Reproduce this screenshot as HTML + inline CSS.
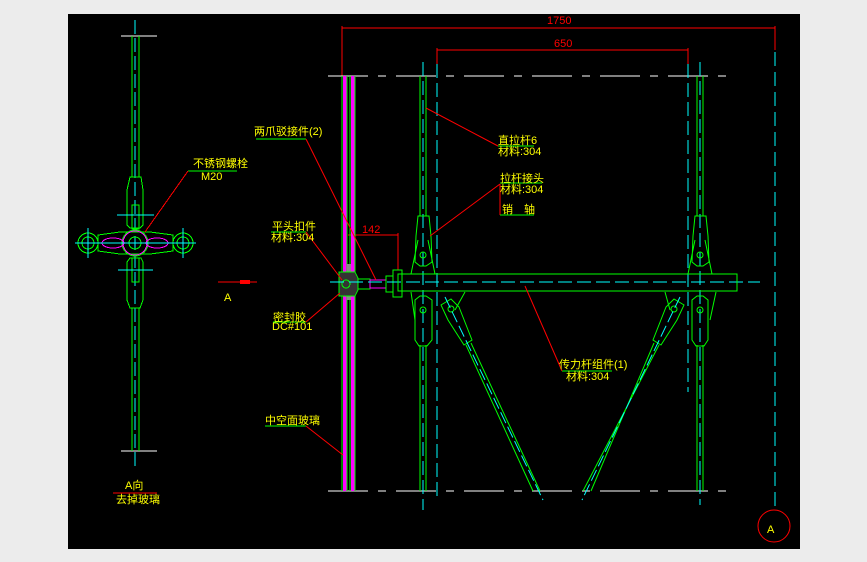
<!DOCTYPE html>
<html><head><meta charset="utf-8"><style>
html,body{margin:0;padding:0;background:#ececec;width:867px;height:562px;overflow:hidden}
svg{display:block}
text{font-family:"Liberation Sans","Noto Sans CJK SC",sans-serif;fill:#ffff00;font-size:11px}
</style></head><body>
<svg width="867" height="562" viewBox="0 0 867 562" xmlns="http://www.w3.org/2000/svg">
<rect x="68" y="14" width="732" height="535" fill="#000"/>
<g fill="none" stroke-width="1" shape-rendering="crispEdges">
<!-- LEFT VIEW -->
<line x1="121" y1="36" x2="157" y2="36" stroke="#fff"/>
<line x1="121" y1="451" x2="157" y2="451" stroke="#fff"/>
<line x1="132" y1="36" x2="132" y2="177" stroke="#0f0"/>
<line x1="139" y1="36" x2="139" y2="177" stroke="#0f0"/>
<line x1="132" y1="308" x2="132" y2="451" stroke="#0f0"/>
<line x1="139" y1="308" x2="139" y2="451" stroke="#0f0"/>
<line x1="135" y1="20" x2="135" y2="467" stroke="#0ff" stroke-dasharray="14,4"/>
<path d="M130 177 L141 177 L143 190 L143 225 L140 228 L130 228 L127 225 L127 190 Z" stroke="#0f0"/>
<path d="M130 258 L141 258 L143 262 L143 300 L140 308 L130 308 L127 300 L127 262 Z" stroke="#0f0"/>
<rect x="132" y="205" width="7" height="24" stroke="#0f0"/>
<rect x="132" y="258" width="7" height="24" stroke="#0f0"/>
<line x1="117" y1="215" x2="154" y2="215" stroke="#0ff"/>
<line x1="118" y1="270" x2="153" y2="270" stroke="#0ff"/>
<path d="M98 235 L120 232 L150 232 L173 235 L173 251 L150 254 L120 254 L98 251 Z" stroke="#0f0"/>
<circle cx="88" cy="243" r="10" stroke="#0f0"/>
<circle cx="88" cy="243" r="6" stroke="#0f0"/>
<circle cx="183" cy="243" r="10" stroke="#0f0"/>
<circle cx="183" cy="243" r="6" stroke="#0f0"/>
<circle cx="135" cy="243" r="13" stroke="#0f0"/>
<circle cx="135" cy="243" r="12" stroke="#f0f"/>
<circle cx="135" cy="243" r="6" stroke="#0f0"/>
<ellipse cx="113" cy="243" rx="11" ry="5" stroke="#f0f"/>
<ellipse cx="157" cy="243" rx="11" ry="5" stroke="#f0f"/>
<line x1="75" y1="243" x2="196" y2="243" stroke="#0ff"/>
<line x1="88" y1="228" x2="88" y2="258" stroke="#0ff"/>
<line x1="183" y1="228" x2="183" y2="258" stroke="#0ff"/>
<line x1="188" y1="171" x2="237" y2="171" stroke="#0f0"/>
<line x1="188" y1="171" x2="145" y2="232" stroke="#f00"/>
<line x1="113" y1="493" x2="157" y2="493" stroke="#f00"/>
<line x1="218" y1="282" x2="257" y2="282" stroke="#f00"/>
<rect x="240" y="280" width="10" height="4" fill="#f00" stroke="none"/>
<!-- Dimensions -->
<line x1="342" y1="28" x2="775" y2="28" stroke="#f00"/>
<line x1="342" y1="26" x2="342" y2="76" stroke="#f00"/>
<line x1="775" y1="26" x2="775" y2="50" stroke="#f00"/>
<line x1="437" y1="50" x2="688" y2="50" stroke="#f00"/>
<line x1="437" y1="48" x2="437" y2="64" stroke="#f00"/>
<line x1="688" y1="48" x2="688" y2="64" stroke="#f00"/>
<line x1="348" y1="235" x2="398" y2="235" stroke="#f00"/>
<line x1="398" y1="233" x2="398" y2="270" stroke="#f00"/>
<!-- white dashed -->
<line x1="328" y1="76" x2="730" y2="76" stroke="#fff" stroke-dasharray="40,10,8,10"/>
<line x1="328" y1="491" x2="730" y2="491" stroke="#fff" stroke-dasharray="40,10,8,10"/>
<!-- glass -->
<rect x="343" y="76" width="4" height="415" fill="#f0f" stroke="none"/>
<rect x="351" y="76" width="4" height="415" fill="#f0f" stroke="none"/>
<line x1="342" y1="76" x2="342" y2="491" stroke="#0f0"/>
<line x1="347" y1="76" x2="347" y2="491" stroke="#0f0"/>
<line x1="350" y1="76" x2="350" y2="491" stroke="#0f0"/>
<line x1="355" y1="76" x2="355" y2="491" stroke="#0f0"/>
<rect x="347" y="264" width="4" height="36" fill="#888" stroke="none"/>
<path d="M339 272 L355 272 L358 278 L358 290 L355 296 L339 296 Z" stroke="#0f0" fill="#333"/>
<circle cx="346" cy="284" r="4" stroke="#0f0"/>
<rect x="358" y="279" width="12" height="10" stroke="#0f0"/>
<rect x="370" y="280" width="16" height="8" stroke="#f0f"/>
<rect x="386" y="276" width="7" height="16" stroke="#0f0"/>
<rect x="393" y="270" width="9" height="27" stroke="#0f0"/>
<!-- cyan centerlines -->
<line x1="330" y1="282" x2="760" y2="282" stroke="#0ff" stroke-dasharray="14,5"/>
<line x1="423" y1="62" x2="423" y2="510" stroke="#0ff" stroke-dasharray="14,5"/>
<line x1="700" y1="62" x2="700" y2="505" stroke="#0ff" stroke-dasharray="14,5"/>
<line x1="437" y1="64" x2="437" y2="500" stroke="#0ff" stroke-dasharray="14,5"/>
<line x1="688" y1="64" x2="688" y2="392" stroke="#0ff" stroke-dasharray="14,5"/>
<line x1="775" y1="52" x2="775" y2="510" stroke="#0ff" stroke-dasharray="14,6"/>
<!-- main rod -->
<rect x="398" y="274" width="339" height="17" stroke="#0f0"/>
<!-- vertical rods -->
<line x1="420" y1="76" x2="420" y2="216" stroke="#0f0"/>
<line x1="426" y1="76" x2="426" y2="216" stroke="#0f0"/>
<line x1="697" y1="76" x2="697" y2="216" stroke="#0f0"/>
<line x1="703" y1="76" x2="703" y2="216" stroke="#0f0"/>
<line x1="420" y1="345" x2="420" y2="491" stroke="#0f0"/>
<line x1="426" y1="345" x2="426" y2="491" stroke="#0f0"/>
<line x1="697" y1="345" x2="697" y2="491" stroke="#0f0"/>
<line x1="703" y1="345" x2="703" y2="491" stroke="#0f0"/>
</g>
<g fill="none" stroke-width="1">
<!-- clevises -->
<path d="M418 216 L429 216 L431 236 L432 262 L426 266 L420 266 L415 262 L416 236 Z M411 274 L418 240 M435 274 L428 240" stroke="#0f0"/>
<circle cx="423" cy="255" r="3" stroke="#0f0"/>
<path d="M695 216 L706 216 L708 236 L709 262 L703 266 L697 266 L692 262 L693 236 Z M688 274 L695 240 M712 274 L705 240" stroke="#0f0"/>
<circle cx="700" cy="255" r="3" stroke="#0f0"/>
<path d="M420 296 L426 296 L432 300 L432 340 L427 346 L419 346 L415 340 L415 300 Z M411 292 L415 320 M465 292 L455 310" stroke="#0f0"/>
<circle cx="423" cy="310" r="3" stroke="#0f0"/>
<path d="M697 296 L703 296 L708 300 L708 340 L704 346 L696 346 L692 340 L692 300 Z M665 292 L670 310 M716 292 L710 320" stroke="#0f0"/>
<circle cx="700" cy="310" r="3" stroke="#0f0"/>
<!-- diagonal rods -->
<path d="M441 305 L451 299 L459 307 L472 340 L464 345 L448 320 Z" stroke="#0f0"/>
<circle cx="451" cy="309" r="3" stroke="#0f0"/>
<line x1="466" y1="345" x2="533" y2="491" stroke="#0f0"/>
<line x1="471" y1="343" x2="540" y2="491" stroke="#0f0"/>
<line x1="445" y1="297" x2="543" y2="500" stroke="#0ff" stroke-dasharray="12,4"/>
<path d="M684 305 L674 299 L666 307 L653 340 L661 345 L677 320 Z" stroke="#0f0"/>
<circle cx="674" cy="309" r="3" stroke="#0f0"/>
<line x1="659" y1="345" x2="583" y2="491" stroke="#0f0"/>
<line x1="654" y1="343" x2="591" y2="491" stroke="#0f0"/>
<line x1="680" y1="297" x2="582" y2="500" stroke="#0ff" stroke-dasharray="12,4"/>
<!-- leaders -->
<line x1="256" y1="139" x2="306" y2="139" stroke="#0f0"/>
<line x1="306" y1="139" x2="376" y2="280" stroke="#f00"/>
<line x1="271" y1="232" x2="306" y2="232" stroke="#0f0"/>
<line x1="306" y1="232" x2="342" y2="280" stroke="#f00"/>
<line x1="273" y1="322" x2="306" y2="322" stroke="#0f0"/>
<line x1="306" y1="322" x2="340" y2="293" stroke="#f00"/>
<line x1="265" y1="426" x2="306" y2="426" stroke="#0f0"/>
<line x1="306" y1="426" x2="343" y2="455" stroke="#f00"/>
<line x1="498" y1="146" x2="534" y2="146" stroke="#0f0"/>
<line x1="498" y1="146" x2="426" y2="108" stroke="#f00"/>
<line x1="500" y1="183" x2="542" y2="183" stroke="#0f0"/>
<line x1="500" y1="184" x2="430" y2="236" stroke="#f00"/>
<line x1="500" y1="184" x2="500" y2="215" stroke="#f00"/>
<line x1="500" y1="215" x2="534" y2="215" stroke="#0f0"/>
<line x1="562" y1="371" x2="612" y2="371" stroke="#0f0"/>
<line x1="562" y1="371" x2="525" y2="286" stroke="#f00"/>
<circle cx="774" cy="526" r="16" stroke="#f00"/>
</g>
<text x="193" y="167" font-size="12">不锈钢螺栓</text>
<text x="201" y="180" font-size="8">M20</text>
<text x="224" y="301" font-size="10">A</text>
<text x="125" y="489" font-size="11">A向</text>
<text x="116" y="503" font-size="12">去掉玻璃</text>
<text x="254" y="135" font-size="12">两爪驳接件(2)</text>
<text x="272" y="230" font-size="12">平头扣件</text>
<text x="271" y="241" font-size="8">材料:304</text>
<text x="273" y="321" font-size="12">密封胶</text>
<text x="272" y="330" font-size="8">DC#101</text>
<text x="265" y="424" font-size="12">中空面玻璃</text>
<text x="547" y="24" font-size="10" style="fill:#f00">1750</text>
<text x="554" y="47" font-size="10" style="fill:#f00">650</text>
<text x="362" y="233" font-size="10" style="fill:#f00">142</text>
<text x="498" y="144" font-size="11">直拉杆6</text>
<text x="498" y="155" font-size="8">材料:304</text>
<text x="500" y="182" font-size="11">拉杆接头</text>
<text x="500" y="193" font-size="8">材料:304</text>
<text x="502" y="213" font-size="11">销　轴</text>
<text x="559" y="368" font-size="12">传力杆组件(1)</text>
<text x="566" y="380" font-size="8">材料:304</text>
<text x="767" y="533" font-size="16">A</text>
</svg>
</body></html>
